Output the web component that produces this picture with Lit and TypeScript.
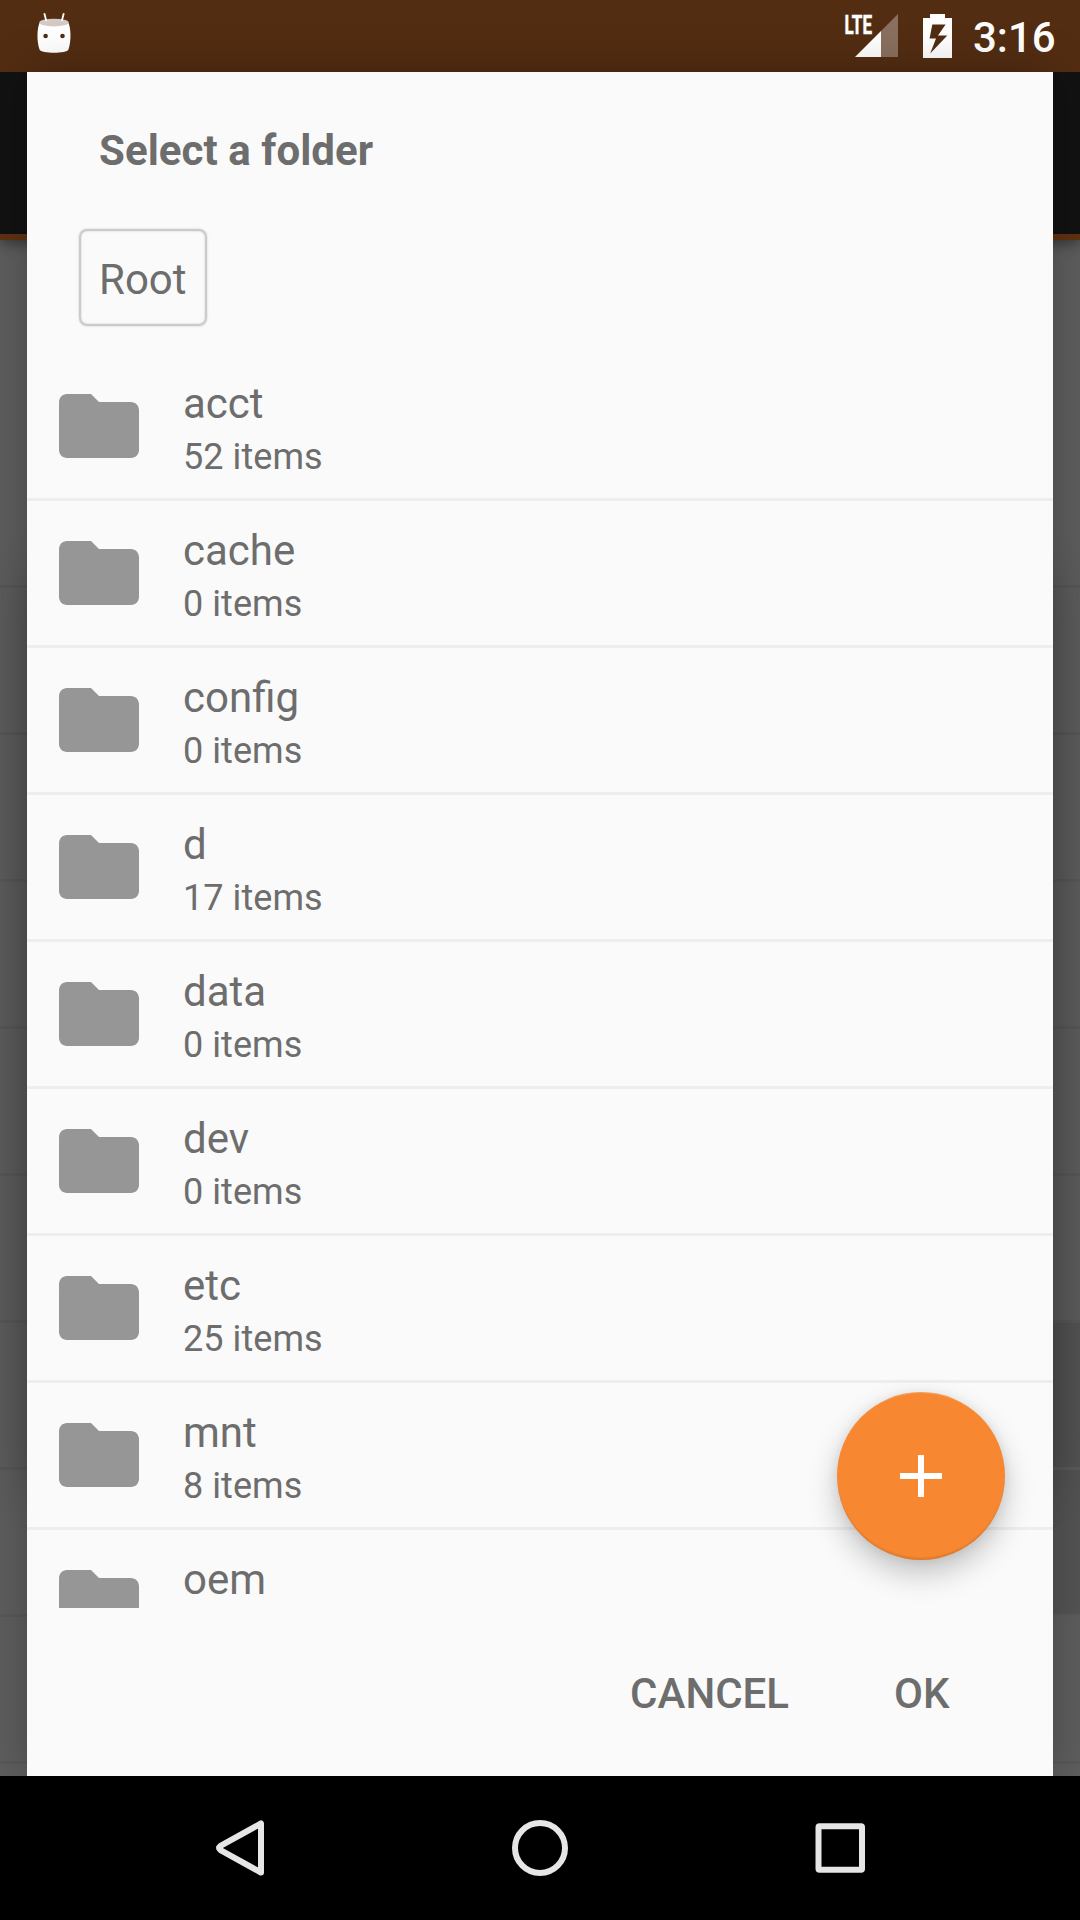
import { LitElement, html, css, svg, nothing } from "lit";
import { customElement, property } from "lit/decorators.js";

interface Folder {
  name: string;
  count?: number;
}

const FOLDERS: Folder[] = [
  { name: "acct", count: 52 },
  { name: "cache", count: 0 },
  { name: "config", count: 0 },
  { name: "d", count: 17 },
  { name: "data", count: 0 },
  { name: "dev", count: 0 },
  { name: "etc", count: 25 },
  { name: "mnt", count: 8 },
  { name: "oem" },
];

@customElement("status-bar")
class StatusBar extends LitElement {
  static styles = css`
    :host {
      display: flex;
      justify-content: space-between;
      height: 72px;
      background: #532d12;
      color: #fff;
    }
    .left {
      display: block;
      margin-left: 30px;
    }
    .right {
      display: flex;
    }
    .time {
      width: 110px;
      box-sizing: border-box;
      padding-left: 3px;
      font: 500 42px/75px Roboto, sans-serif;
      white-space: nowrap;
    }
    .lte {
      font: 700 26px Roboto, sans-serif;
    }
  `;

  render() {
    return html`
      <svg class="left" width="48" height="72" viewBox="30 0 48 72">
        <path
          d="M40 22C37 27 36.500 41 39.500 49.500C41 53.800 67 53.800 68.500 49.500C71.500 41 71 27 68 22Z"
          fill="#fff"
        />
        <ellipse cx="54" cy="22.600" rx="14.700" ry="3.900" fill="#d4cac4" />
        <path d="M44.300 13.200L46.300 21M63.800 13.200L61.800 21" stroke="#fff" stroke-width="1.800" />
        <circle cx="45.600" cy="36" r="2.300" fill="#532d12" />
        <circle cx="62.500" cy="36" r="2.300" fill="#532d12" />
      </svg>
      <div class="right">
        <svg width="130" height="72" viewBox="840 0 130 72">
          <text
            class="lte"
            x="844.500"
            y="33.600"
            textLength="27.500"
            lengthAdjust="spacingAndGlyphs"
            fill="#fff"
            stroke="#fff"
            stroke-width=".5"
          >LTE</text>
          <path d="M898 14V57H881V31Z" fill="#fff" fill-opacity=".32" />
          <path d="M881 31V57H855Z" fill="#fff" />
          <path
            fill-rule="evenodd"
            d="M930 14H945V18H952V58H923V18H930ZM932.300 24.600L929.600 38.400H936L930.200 53.400L947.300 35.400H938L945.600 24.600Z"
            fill="#fff"
          />
        </svg>
        <div class="time">3:16</div>
      </div>
    `;
  }
}

@customElement("dimmed-page")
class DimmedPage extends LitElement {
  static styles = css`
    :host {
      display: grid;
      overflow: hidden;
      background: #5e5e5e;
    }
    .page {
      grid-area: 1 / 1;
      display: flex;
      flex-direction: column;
    }
    .toolbar {
      flex: none;
      height: 162px;
      background: #121212;
      border-bottom: 6px solid #5f3212;
      box-shadow: 0 4px 12px rgba(0, 0, 0, 0.4);
    }
    .gap {
      flex: none;
      height: 345px;
    }
    .row {
      flex: none;
      height: 144px;
      border-top: 3px solid #595959;
      display: flex;
      justify-content: flex-end;
    }
    .cell {
      width: 540px;
    }
    .cell.dark {
      background: #545454;
    }
    .cell.line {
      box-shadow: 0 -3px #5c5c5c;
    }
    .popup {
      grid-area: 1 / 1;
      margin: 512px 32px 430px;
      box-shadow: 0 0 46px 6px rgba(0, 0, 0, 0.2);
    }
  `;

  render() {
    const rows = [0, 1, 2, 3, 4, 5, 6, 7, 8];
    return html`
      <div class="page">
        <div class="toolbar"></div>
        <div class="gap"></div>
        ${rows.map(
          (i) => html`<div class="row">
            <div class="cell ${i === 5 || i === 6 ? "dark" : ""} ${i === 6 || i === 7 ? "line" : ""}"></div>
          </div>`
        )}
      </div>
      <div class="popup"></div>
    `;
  }
}

@customElement("folder-row")
class FolderRow extends LitElement {
  @property({ attribute: false }) folder!: Folder;

  static styles = css`
    :host {
      flex: none;
      display: flex;
      align-items: center;
      gap: 36px;
      height: 144px;
      padding-left: 24px;
      border-bottom: 3px solid #eeeeee;
      color: #6d6d6d;
    }
    .icon {
      display: block;
    }
    .label {
      height: 105px;
      padding-top: 6px;
    }
    .name {
      margin-bottom: 1px;
      font-size: 42px;
      line-height: 54px;
    }
    .count {
      font-size: 36px;
      line-height: 50px;
      letter-spacing: 0.06px;
    }
  `;

  render() {
    const { name, count } = this.folder;
    return html`
      <svg class="icon" width="96" height="96" viewBox="0 0 24 24">
        <path
          fill="#969696"
          d="M10 4H4c-1.100 0-1.990.9-1.990 2L2 18c0 1.100.9 2 2 2h16c1.100 0 2-.9 2-2V8c0-1.100-.9-2-2-2h-8l-2-2z"
        />
      </svg>
      <div class="label">
        <div class="name">${name}</div>
        ${count === undefined ? nothing : html`<div class="count">${count} items</div>`}
      </div>
    `;
  }
}

@customElement("folder-dialog")
class FolderDialog extends LitElement {
  static styles = css`
    :host {
      position: relative;
      display: flex;
      flex-direction: column;
      background: #fafafa;
      color: #6d6d6d;
      font-size: 42px;
      box-shadow: 0 0 44px rgba(0, 0, 0, 0.26);
    }
    .title {
      height: 156px;
      padding-left: 72px;
      font-weight: 700;
      line-height: 157px;
      letter-spacing: 0.06px;
    }
    .crumb {
      align-self: flex-start;
      box-sizing: border-box;
      width: 128px;
      height: 97px;
      margin: 1px 0 28px 52px;
      padding-left: 18px;
      line-height: 98px;
      border: 2px solid #cbcbcb;
      border-radius: 8px;
      box-shadow: 0 0 2px #c4c4c4, inset 0 0 2px #c4c4c4;
    }
    .list {
      height: 1254px;
      overflow: hidden;
      display: flex;
      flex-direction: column;
    }
    .actions {
      flex: 1;
      display: flex;
      justify-content: flex-end;
      gap: 105px;
      padding-right: 103.5px;
      font-weight: 500;
      line-height: 171px;
    }
    .fab {
      position: absolute;
      right: 48px;
      bottom: 216px;
      width: 168px;
      height: 168px;
      margin-bottom: 3px;
      border-radius: 50%;
      background: #f78731;
      box-shadow: 0 14px 30px rgba(0, 0, 0, 0.22), 0 1px 12px rgba(0, 0, 0, 0.08),
        inset 0 -3px 2px -1px rgba(0, 0, 0, 0.1), inset 0 2px 1px -1px rgba(255, 255, 255, 0.2);
    }
    .plus {
      display: block;
    }
  `;

  render() {
    return html`
      <div class="title">Select a folder</div>
      <div class="crumb">Root</div>
      <div class="list">${FOLDERS.map((f) => html`<folder-row .folder=${f}></folder-row>`)}</div>
      <div class="actions"><span>CANCEL</span><span>OK</span></div>
      <div class="fab">
        <svg class="plus" width="168" height="168" viewBox="0 0 168 168">
          <path d="M63 84H105M84 63V105" stroke="#fff" stroke-width="6" />
        </svg>
      </div>
    `;
  }
}

@customElement("nav-bar")
class NavBar extends LitElement {
  static styles = css`
    :host {
      position: relative;
      display: flex;
      justify-content: center;
      align-items: center;
      gap: 204px;
      height: 144px;
      background: #000;
    }
    .key {
      display: block;
      fill: none;
      stroke: #e6e6e6;
      stroke-width: 6;
      stroke-linejoin: round;
    }
  `;

  private key(shape: unknown) {
    return html`<svg class="key" width="96" height="96" viewBox="0 0 96 96">${shape}</svg>`;
  }

  render() {
    return html`
      ${this.key(svg`<path d="M69 23.500V72.500L28.500 50.200Q25.500 48 28.500 45.800Z"/>`)}
      ${this.key(svg`<circle cx="48" cy="48" r="25"/>`)}
      ${this.key(svg`<rect x="26.500" y="26.200" width="43.500" height="43.600" rx="1"/>`)}
    `;
  }
}

@customElement("app-root")
class AppRoot extends LitElement {
  static styles = css`
    :host {
      display: flex;
      flex-direction: column;
      width: 1080px;
      height: 1920px;
      overflow: hidden;
      font-family: Roboto, sans-serif;
    }
    .stage {
      flex: 1;
      min-height: 0;
      display: grid;
    }
    .behind {
      grid-area: 1 / 1;
    }
    .dialog {
      grid-area: 1 / 1;
      margin: 0 27px;
    }
  `;

  render() {
    return html`
      <status-bar></status-bar>
      <div class="stage">
        <dimmed-page class="behind"></dimmed-page>
        <folder-dialog class="dialog"></folder-dialog>
      </div>
      <nav-bar></nav-bar>
    `;
  }
}
